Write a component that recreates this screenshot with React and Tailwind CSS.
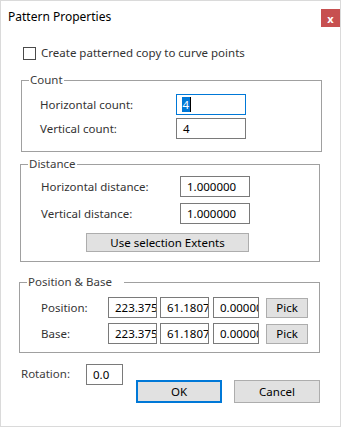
const font = { fontFamily: '"Noto Sans", "Open Sans", sans-serif' };

const boxClass =
  "h-[21px] border border-[#7a7a7a] bg-white pl-[6px] pr-[1px] flex items-center overflow-hidden whitespace-nowrap text-[11.5px] text-black";

const btnClass =
  "flex items-center justify-center border border-[#adadad] bg-[#e1e1e1] text-[11.5px] text-black";

function Field({ value, className = "" }) {
  return <div className={`${boxClass} ${className}`}>{value}</div>;
}

function Group({ title, className = "", children }) {
  return (
    <fieldset className={`border border-[#a0a0a0] ${className}`}>
      <legend className="ml-[7px] px-[1px] text-[11.5px] leading-[16px] text-[#3c3c3c]">{title}</legend>
      {children}
    </fieldset>
  );
}

export default function App() {
  return (
    <div style={font} className="w-[341px] h-[427px] bg-white border border-[#dadada] text-[11.5px] text-[#333] flex flex-col">
      {/* title bar */}
      <div className="flex items-start h-[33px]">
        <div className="ml-[7px] mt-[7px] text-[12px] leading-[18px] text-black">Pattern Properties</div>
        <div className="ml-auto mt-[8px] mr-0 w-[19px] h-[18px] bg-[#c75050] flex items-center justify-center text-white text-[11px] font-bold leading-none">
          x
        </div>
      </div>

      {/* checkbox */}
      <label className="ml-[22px] mt-[12px] flex items-center gap-[5px] h-[14px]">
        <span className="w-[13px] h-[13px] border border-[#4a4a4a] bg-white" />
        <span className="text-[#333]">Create patterned copy to curve points</span>
      </label>

      {/* Count */}
      <Group title="Count" className="ml-[20px] w-[301px] mt-[12px] pb-[12px]">
        <div className="flex flex-col gap-[3px] pt-[6px]">
          <div className="flex items-center">
            <span className="ml-[18px] w-[136px]">Horizontal count:</span>
            <div className="h-[21px] w-[70px] border border-[#0078d7] bg-white pl-[5px] flex items-center text-black">
              <span className="bg-[#0078d7] text-white leading-[15px] px-[0.5px]">4</span>
              <span className="w-px h-[15px] bg-black" />
            </div>
          </div>
          <div className="flex items-center">
            <span className="ml-[18px] w-[136px]">Vertical count:</span>
            <Field value="4" className="w-[70px] pl-[5px]" />
          </div>
        </div>
      </Group>

      {/* Distance */}
      <Group title="Distance" className="ml-[19px] w-[300px] mt-[4px] pb-[9px]">
        <div className="flex flex-col pt-[4px]">
          <div className="flex items-center">
            <span className="ml-[20px] w-[139px]">Horizontal distance:</span>
            <Field value="1.000000" className="w-[70px]" />
          </div>
          <div className="flex items-center mt-[6px]">
            <span className="ml-[20px] w-[139px]">Vertical distance:</span>
            <Field value="1.000000" className="w-[70px]" />
          </div>
          <div className={`${btnClass} ml-[65px] w-[163px] h-[19px] mt-[9px]`}>Use selection Extents</div>
        </div>
      </Group>

      {/* Position & Base */}
      <Group title={<span className="pr-[11px]">Position &amp; Base</span>} className="ml-[18px] w-[301px] mt-[12px] pb-[8px]">
        <div className="flex flex-col gap-[5px] pt-[7px]">
          {["Position:", "Base:"].map((label) => (
            <div key={label} className="flex items-center">
              <span className="ml-[21px] w-[67px]">{label}</span>
              <Field value="223.3750" className="w-[49px] pl-[5px]" />
              <Field value="61.18070" className="w-[49px] ml-[3px] pl-[5px]" />
              <Field value="0.000000" className="w-[46px] ml-[4px] pl-[5px]" />
              <div className={`${btnClass} w-[42px] h-[20px] ml-[7px]`}>Pick</div>
            </div>
          ))}
        </div>
      </Group>

      {/* bottom row */}
      <div className="flex items-start mt-[11px]">
        <span className="ml-[20px] mt-[1px] w-[65px] text-[#3c3c3c]">Rotation:</span>
        <Field value="0.0" className="w-[37px] h-[20px] pl-[5px]" />
        <div className="ml-[13px] mt-[16px] w-[86px] h-[23px] border-2 border-[#0078d7] bg-[#e1e1e1] flex items-center justify-center text-black">
          OK
        </div>
        <div className={`${btnClass} ml-[12px] mt-[16px] w-[86px] h-[23px]`}>Cancel</div>
      </div>
    </div>
  );
}
